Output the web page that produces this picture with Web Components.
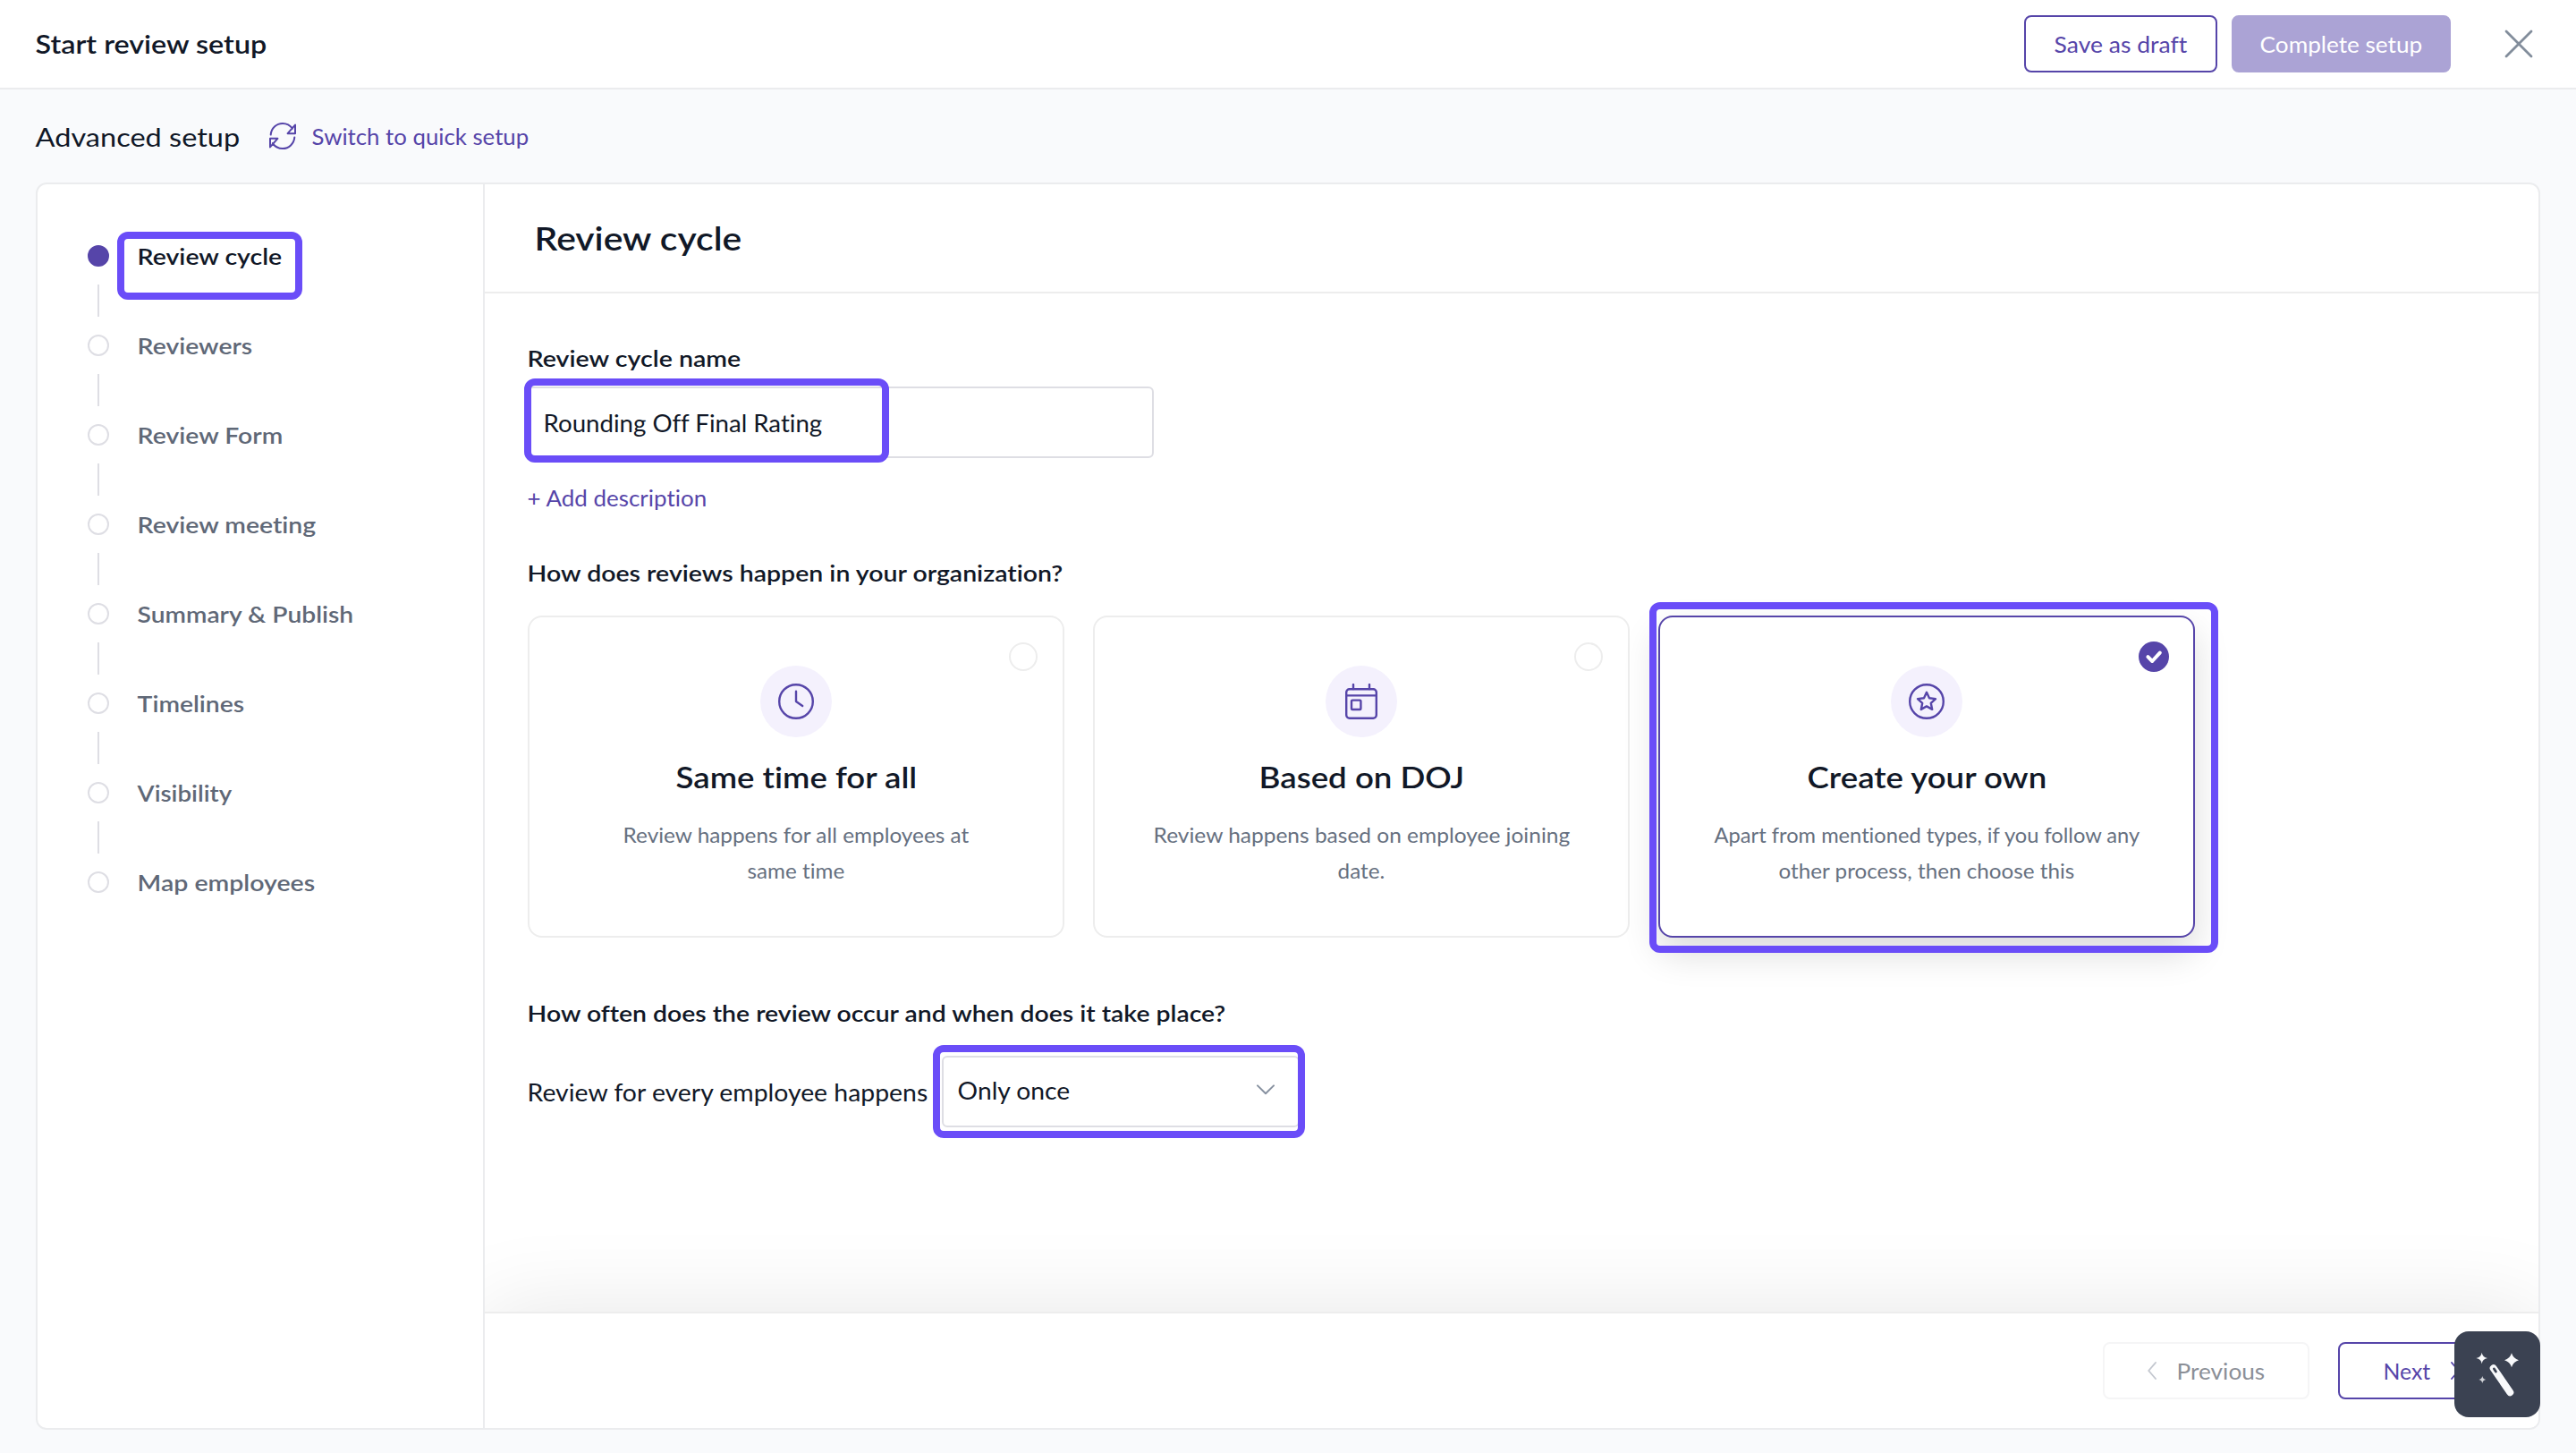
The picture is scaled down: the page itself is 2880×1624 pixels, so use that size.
<!DOCTYPE html>
<html lang="en">
<head>
<meta charset="utf-8">
<title>Start review setup</title>
<style>
  html, body { margin: 0; height: 100%; }
  body {
    --ink: #111827; --muted: #5f6877; --brand: #5645a9; --line: #ebecee; --field: #dedee4; --mark: #6a4df8;
    background: #f9fafc; color: var(--ink);
    font-family: Lato, "Open Sans", sans-serif; font-size: 26px; line-height: 40px;
    font-variant-ligatures: none;
    overflow: hidden;
  }
</style>
</head>
<body>
<setup-page></setup-page>

<script>
function define(name, html, setup) {
  const template = document.createElement('template');
  template.innerHTML = html;
  customElements.define(name, class extends HTMLElement {
    connectedCallback() {
      if (this.shadowRoot) return;
      this.attachShadow({ mode: 'open' }).append(template.content.cloneNode(true));
      if (setup) setup(this, this.shadowRoot);
    }
  });
}

const ICONS = {
  close: ['0 0 32 32', '<path d="M2 2l28 28M30 2L2 30" stroke-width="2.8"/>'],
  swap: ['0 0 30 30', '<path d="M1.7 13.6C2.3 6.400 8 1 15 1c4.500 0 8.300 2 11 5.600M28.300 16.400C27.700 23.600 22 29 15 29c-4.600 0-8.700-2.300-11.200-5.900M29 2.600v9.600h-8.400zM1 27.400v-9.600h8.400z" stroke-width="2"/>'],
  clock: ['0 0 40 40', '<circle cx="20" cy="20" r="18.800"/><path d="M20 8.800V20l7.200 5"/>'],
  calendar: ['0 0 40 40', '<rect x="3.200" y="6.200" width="33.600" height="32.600" rx="3.500"/><path d="M3.200 13.400h33.600M11 1v5M29 1v5"/><rect x="9" y="18.600" width="10.400" height="10.400" rx="1"/>'],
  star: ['0 0 40 40', '<circle cx="20" cy="20" r="18.800"/><path d="M20 9.800l3 6.500 7 .8-5.200 4.800 1.400 7-6.200-3.500-6.200 3.500 1.400-7L10 17.100l7-.8z"/>'],
  check: ['0 0 34 34', '<path d="M10.400 17.200l4.800 4.800 8.600-9.400" stroke-width="4"/>'],
  down: ['0 0 20 12', '<path d="M1 1.400l9 8.800 9-8.800" stroke-width="2"/>'],
  left: ['0 0 10 20', '<path d="M9 1L1.200 10 9 19" stroke-width="1.900"/>'],
  right: ['0 0 10 20', '<path d="M1 1l7.800 9L1 19" stroke-width="1.900"/>'],
  wand: ['0 0 96 96', '<path d="M43.700 41.200L62.300 68.200" stroke-width="8"/><path d="M44.400 42l2 3" stroke="#3b4252" stroke-width="2.800"/><g fill="currentColor" stroke="none"><path d="M30.700 23.700q.8 5.500 6.300 6.300-5.500.8-6.300 6.300-.8-5.500-6.300-6.300 5.500-.8 6.300-6.300z"/><path d="M64 24.300q1.800 6.200 8 8-6.200 1.800-8 8-1.800-6.200-8-8 6.200-1.800 8-8z"/><path d="M31.300 50q.6 3.400 4 4-3.400.6-4 4-.6-3.400-4-4 3.400-.6 4-4z" opacity=".8"/></g>']
};

define('setup-page', `
  <style>
    :host { display: flex; flex-direction: column; height: 1624px; }
    .panel { display: flex; box-sizing: border-box; height: 1394px; margin: 0 40px; background: #fff;
      border: 2px solid var(--line); border-radius: 12px; overflow: hidden; }
  </style>
  <top-bar></top-bar>
  <mode-bar></mode-bar>
  <div class="panel">
    <step-list></step-list>
    <cycle-form></cycle-form>
  </div>
  <assist-button></assist-button>
`);

define('top-bar', `
  <style>
    :host { display: flex; align-items: center; box-sizing: border-box; height: 100px; padding: 0 48px 0 39px;
      background: #fff; border-bottom: 2px solid var(--line); }
    h1 { margin: 0 auto 0 0; font-size: 29px; font-weight: 600; }
    .actions { display: flex; gap: 16px; margin-right: 60px; }
    ui-icon { color: #828d9b; width: 32px; height: 32px; }
  </style>
  <h1><fit-text w="260">Start review setup</fit-text></h1>
  <div class="actions">
    <ui-button style="width:216px"><fit-text w="150">Save as draft</fit-text></ui-button>
    <ui-button kind="solid" style="width:245px"><fit-text w="183">Complete setup</fit-text></ui-button>
  </div>
  <ui-icon name="close"></ui-icon>
`);

define('mode-bar', `
  <style>
    :host { display: flex; align-items: center; height: 104px; padding-left: 39px; }
    .title { font-size: 29.500px; }
    .switch { display: flex; align-items: center; gap: 17px; margin-left: 32px; color: var(--brand); font-size: 24.500px; }
    ui-icon { width: 30px; height: 30px; }
  </style>
  <span class="title"><fit-text w="230">Advanced setup</fit-text></span>
  <span class="switch"><ui-icon name="swap"></ui-icon><fit-text w="244">Switch to quick setup</fit-text></span>
`);

define('step-list', `
  <style>
    :host { display: block; box-sizing: border-box; width: 500px; flex: none; padding: 68px 0 0 56px; border-right: 2px solid var(--line); }
  </style>
  <step-item active><fit-text w="163">Review cycle</fit-text></step-item>
  <step-item><fit-text w="130">Reviewers</fit-text></step-item>
  <step-item><fit-text w="164">Review Form</fit-text></step-item>
  <step-item><fit-text w="201">Review meeting</fit-text></step-item>
  <step-item><fit-text w="243">Summary &amp; Publish</fit-text></step-item>
  <step-item><fit-text w="121">Timelines</fit-text></step-item>
  <step-item><fit-text w="107">Visibility</fit-text></step-item>
  <step-item last><fit-text w="200">Map employees</fit-text></step-item>
`);

define('step-item', `
  <style>
    :host { display: flex; flex-direction: column; height: 100px; position: relative; color: var(--muted); font-weight: 600; font-size: 25.500px; }
    .row { display: flex; align-items: center; gap: 31px; height: 24px; }
    .dot { box-sizing: border-box; width: 24px; height: 24px; border-radius: 50%; border: 2px solid var(--field); }
    .link { width: 2px; height: 36px; margin: 20px 0 0 11px; background: var(--field); }
    mark-box { display: none; left: 33px; top: -15px; width: 207px; height: 76px; }
    :host([active]) { color: var(--ink); }
    :host([active]) .dot { background: var(--brand); border-color: var(--brand); }
    :host([active]) mark-box { display: block; }
    :host([last]) .link { display: none; }
  </style>
  <div class="row"><span class="dot"></span><slot></slot></div>
  <span class="link"></span>
  <mark-box></mark-box>
`);

define('cycle-form', `
  <style>
    :host { display: flex; flex-direction: column; flex: 1; min-width: 0; overflow: hidden; }
    header { display: flex; align-items: center; box-sizing: border-box; height: 122px; padding-left: 55px; border-bottom: 2px solid #ededed; }
    h2 { margin: 0; font-size: 37px; font-weight: 600; }
    main { flex: 1; padding: 52px 0 0 47px; }
    .q { height: 40px; font-weight: 600; font-size: 25.500px; }
    .field { position: relative; display: flex; align-items: center; box-sizing: border-box; height: 80px;
      border: 2px solid var(--field); border-radius: 6px; }
    .name { width: 700px; margin: 12px 0 24px 1px; padding-left: 15px; }
    .add { height: 40px; margin-bottom: 44px; color: var(--brand); font-size: 24.500px; }
    .cards { display: flex; gap: 32px; margin: 28px 0 64px 1px; }
    .often { display: flex; align-items: center; gap: 15px; margin-top: 28px; }
    .select { justify-content: space-between; width: 400px; padding: 0 26px 4px 15px; }
    .select ui-icon { width: 20px; height: 12px; color: #8791a0; }
    .name mark-box { left: -6px; top: -11px; width: 408px; height: 94px; }
    .select mark-box { left: -12px; top: -14px; width: 416px; height: 104px; }
    footer { display: flex; align-items: center; justify-content: flex-end; gap: 32px; height: 128px; padding-right: 38px;
      border-top: 2px solid #ededed; background: #fff; box-shadow: 0 0 100px rgba(0,0,0,.1); }
    .nav { display: flex; align-items: center; gap: 22px; }
    .nav ui-icon { width: 10px; height: 20px; }
  </style>
  <header><h2><fit-text w="233">Review cycle</fit-text></h2></header>
  <main>
    <div class="q"><fit-text w="240">Review cycle name</fit-text></div>
    <div class="field name"><fit-text w="313">Rounding Off Final Rating</fit-text><mark-box></mark-box></div>
    <div class="add"><fit-text w="202">+ Add description</fit-text></div>
    <div class="q"><fit-text w="600">How does reviews happen in your organization?</fit-text></div>
    <div class="cards">
      <option-card icon="clock">
        <fit-text slot="title" w="271">Same time for all</fit-text>
        <fit-text w="388">Review happens for all employees at</fit-text>
        <fit-text w="110">same time</fit-text>
      </option-card>
      <option-card icon="calendar">
        <fit-text slot="title" w="231">Based on DOJ</fit-text>
        <fit-text w="467">Review happens based on employee joining</fit-text>
        <fit-text w="54">date.</fit-text>
      </option-card>
      <option-card icon="star" selected>
        <fit-text slot="title" w="269">Create your own</fit-text>
        <fit-text w="477">Apart from mentioned types, if you follow any</fit-text>
        <fit-text w="332">other process, then choose this</fit-text>
      </option-card>
    </div>
    <div class="q"><fit-text w="782">How often does the review occur and when does it take place?</fit-text></div>
    <div class="often">
      <fit-text w="449">Review for every employee happens</fit-text>
      <div class="field select"><fit-text w="127">Only once</fit-text><ui-icon name="down"></ui-icon><mark-box></mark-box></div>
    </div>
  </main>
  <footer>
    <ui-button kind="off" style="width:231px"><span class="nav"><ui-icon name="left" style="color:#c4c8d0"></ui-icon><fit-text w="100">Previous</fit-text></span></ui-button>
    <ui-button style="width:186px"><span class="nav"><fit-text w="54">Next</fit-text><ui-icon name="right"></ui-icon></span></ui-button>
  </footer>
`);

define('option-card', `
  <style>
    :host { position: relative; display: flex; flex-direction: column; align-items: center; box-sizing: border-box;
      width: 600px; height: 360px; padding-top: 54px; border: 2px solid #ededed; border-radius: 16px; background: #fff;
      color: #667080; font-size: 23px; }
    .disc { display: flex; align-items: center; justify-content: center; width: 80px; height: 80px; border-radius: 50%;
      background: #f4f1fd; color: var(--brand); }
    .disc ui-icon { width: 40px; height: 40px; }
    h3 { margin: 24px 0; height: 40px; font-size: 33px; font-weight: 600; color: var(--ink); }
    .radio { position: absolute; top: 28px; right: 28px; box-sizing: border-box; width: 32px; height: 32px; border: 2px solid #ededed; border-radius: 50%; }
    .on { display: none; position: absolute; top: 27px; right: 27px; width: 34px; height: 34px; border-radius: 50%; background: var(--brand); color: #fff; }
    mark-box { display: none; left: -12px; top: -17px; width: 636px; height: 392px; }
    :host([selected]) { border-color: var(--brand); box-shadow: 0 18px 40px rgba(0,0,0,.14); }
    :host([selected]) .radio { display: none; }
    :host([selected]) .on, :host([selected]) mark-box { display: block; }
  </style>
  <div class="disc"><ui-icon></ui-icon></div>
  <h3><slot name="title"></slot></h3>
  <slot></slot>
  <span class="radio"></span>
  <ui-icon class="on" name="check"></ui-icon>
  <mark-box></mark-box>
`, (host, root) => root.querySelector('.disc ui-icon').setAttribute('name', host.getAttribute('icon')));

define('ui-button', `
  <style>
    :host { display: flex; align-items: center; justify-content: center; box-sizing: border-box; height: 64px;
      border: 2px solid var(--brand); border-radius: 8px; background: #fff; color: var(--brand); font-size: 24.500px; }
    :host([kind=solid]) { background: #aba3d5; border-color: #aba3d5; color: #fff; }
    :host([kind=off]) { border-color: #f5f5f6; color: #8b8f97; }
  </style><slot></slot>
`);

define('mark-box', `
  <style>
    :host { display: block; position: absolute; box-sizing: border-box; border: 8px solid var(--mark); border-radius: 12px; z-index: 2; }
  </style>
`);

define('assist-button', `
  <style>
    :host { display: block; position: absolute; right: 40px; bottom: 40px; width: 96px; height: 96px; border-radius: 16px; background: #3b4252; color: #f8f9fb; z-index: 3; }
    ui-icon { width: 96px; height: 96px; }
  </style><ui-icon name="wand"></ui-icon>
`);

define('ui-icon', `
  <style>
    :host { display: block; flex: none; }
    svg { display: block; width: 100%; height: 100%; fill: none; stroke: currentColor; stroke-width: 2.400; stroke-linecap: round; stroke-linejoin: round; }
  </style><svg></svg>
`, (host, root) => {
  const [box, shapes] = ICONS[host.getAttribute('name')];
  const svg = root.querySelector('svg');
  svg.setAttribute('viewBox', box);
  svg.innerHTML = shapes;
});

// A label whose letters are widened evenly to the width given in its "w" attribute.
define('fit-text', `
  <style>
    :host { display: block; flex: none; white-space: nowrap; }
    span { display: inline-block; transform-origin: 0 50%; }
  </style><span><slot></slot></span>
`, (host, root) => {
  const span = root.querySelector('span');
  const target = Number(host.getAttribute('w'));
  const natural = span.getBoundingClientRect().width;
  const drop = getComputedStyle(host).fontWeight === '600' ? 0 : .5;
  host.style.width = target + 'px';
  span.style.transform = `translate(.6px, ${drop}px) scaleX(${(target - 1.4) / natural})`;
});
</script>
</body>
</html>
